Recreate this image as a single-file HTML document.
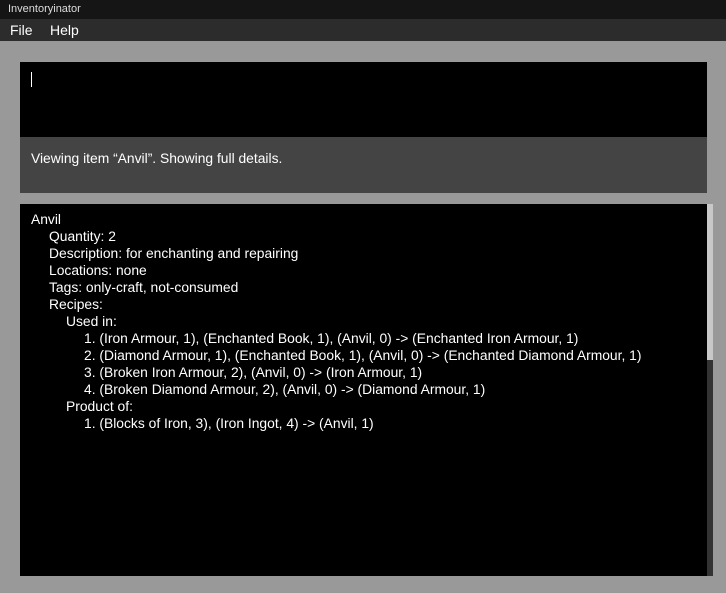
<!DOCTYPE html>
<html><head><style>
body{margin:0;width:726px;height:593px;background:#999;position:relative;overflow:hidden;font-family:"Liberation Sans",sans-serif;color:#fff}
.t{position:absolute;left:0;top:0;width:726px;height:19px;background:#151515;font-size:11px;line-height:19px;text-indent:8px;color:#ddd}
.m{position:absolute;left:0;top:19px;width:726px;height:22px;background:#2c2c2c;font-size:14px;line-height:22px}
.m span{position:absolute;top:0}
.a{position:absolute;left:20px;top:62px;width:687px;height:75px;background:#000}
.cur{position:absolute;left:11px;top:10px;width:1px;height:15px;background:#fff}
.s{position:absolute;left:20px;top:137px;width:687px;height:56px;background:#444;font-size:13.85px;line-height:42px;text-indent:11px}
.b{position:absolute;left:20px;top:204px;width:687px;height:372px;background:#000;font-size:13.85px}
.l{position:absolute;white-space:nowrap;line-height:17px}
.sb1{position:absolute;left:707px;top:204px;width:6px;height:156px;background:#c8c8c8}
.sb2{position:absolute;left:707px;top:360px;width:6px;height:216px;background:#333}
</style></head><body>
<div class="t">Inventoryinator</div>
<div class="m"><span style="left:10px">File</span><span style="left:50px">Help</span></div>
<div class="a"><div class="cur"></div></div>
<div class="s">Viewing item “Anvil”. Showing full details.</div>
<div class="b">
<div class="l" style="left:11px;top:7px">Anvil</div>
<div class="l" style="left:29px;top:24px">Quantity: 2</div>
<div class="l" style="left:29px;top:41px">Description: for enchanting and repairing</div>
<div class="l" style="left:29px;top:58px">Locations: none</div>
<div class="l" style="left:29px;top:75px">Tags: only-craft, not-consumed</div>
<div class="l" style="left:29px;top:92px">Recipes:</div>
<div class="l" style="left:46px;top:109px">Used in:</div>
<div class="l" style="left:64px;top:126px">1. (Iron Armour, 1), (Enchanted Book, 1), (Anvil, 0) -&gt; (Enchanted Iron Armour, 1)</div>
<div class="l" style="left:64px;top:143px">2. (Diamond Armour, 1), (Enchanted Book, 1), (Anvil, 0) -&gt; (Enchanted Diamond Armour, 1)</div>
<div class="l" style="left:64px;top:160px">3. (Broken Iron Armour, 2), (Anvil, 0) -&gt; (Iron Armour, 1)</div>
<div class="l" style="left:64px;top:177px">4. (Broken Diamond Armour, 2), (Anvil, 0) -&gt; (Diamond Armour, 1)</div>
<div class="l" style="left:46px;top:194px">Product of:</div>
<div class="l" style="left:64px;top:211px">1. (Blocks of Iron, 3), (Iron Ingot, 4) -&gt; (Anvil, 1)</div>
</div>
<div class="sb1"></div><div class="sb2"></div>
</body></html>
